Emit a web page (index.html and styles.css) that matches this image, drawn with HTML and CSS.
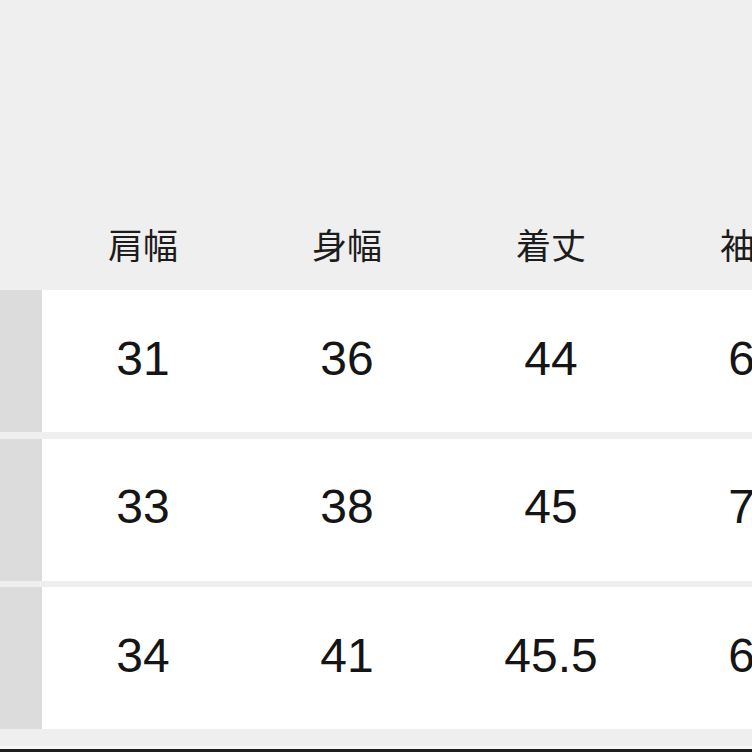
FILE: index.html
```html
<!DOCTYPE html>
<html lang="ja">
<head>
<meta charset="utf-8">
<link rel="stylesheet" href="styles.css">
</head>
<body>
<div class="page">
  <div class="size-table">
    <div class="head-row">
      <div class="head-side"></div>
      <div class="head-cell">肩幅</div>
      <div class="head-cell">身幅</div>
      <div class="head-cell">着丈</div>
      <div class="head-cell">袖丈</div>
    </div>
    <div class="row">
      <div class="side"></div>
      <div class="cell">31</div>
      <div class="cell">36</div>
      <div class="cell">44</div>
      <div class="cell">60</div>
    </div>
    <div class="row">
      <div class="side"></div>
      <div class="cell">33</div>
      <div class="cell">38</div>
      <div class="cell">45</div>
      <div class="cell">70</div>
    </div>
    <div class="row">
      <div class="side"></div>
      <div class="cell">34</div>
      <div class="cell">41</div>
      <div class="cell">45.5</div>
      <div class="cell">60</div>
    </div>
  </div>
  <div class="bottom-line"></div>
</div>
</body>
</html>
```

FILE: styles.css
```css
html, body {
  margin: 0;
  padding: 0;
  background: #efefef;
  overflow: hidden;
}

.page {
  width: 752px;
  height: 752px;
  display: flex;
  flex-direction: column;
  overflow: hidden;
}

.size-table {
  display: flex;
  flex-direction: column;
  gap: 6.5px;
  width: 858px;
}

.head-row,
.row {
  display: grid;
  grid-template-columns: 42px repeat(4, 204px);
}

.head-row {
  height: 290px;
  align-items: end;
  margin-bottom: -6.5px;
}

.head-cell {
  text-align: center;
  font-family: "Noto Sans CJK JP", "Noto Sans", sans-serif;
  font-size: 35px;
  line-height: 40px;
  color: #1c1c1c;
  padding-bottom: 26px;
  padding-right: 2px;
}

.row {
  height: 142px;
}

.side {
  background: #dcdcdc;
}

.cell {
  background: #ffffff;
  display: flex;
  align-items: center;
  justify-content: center;
  font-family: "Liberation Sans", Arial, sans-serif;
  font-size: 48px;
  color: #151515;
  padding-bottom: 6px;
  padding-right: 2px;
  box-sizing: border-box;
}

.bottom-line {
  margin-top: auto;
  height: 3px;
  background: #1e1e1e;
  border-top: 3px solid #f8f8f8;
}
```
